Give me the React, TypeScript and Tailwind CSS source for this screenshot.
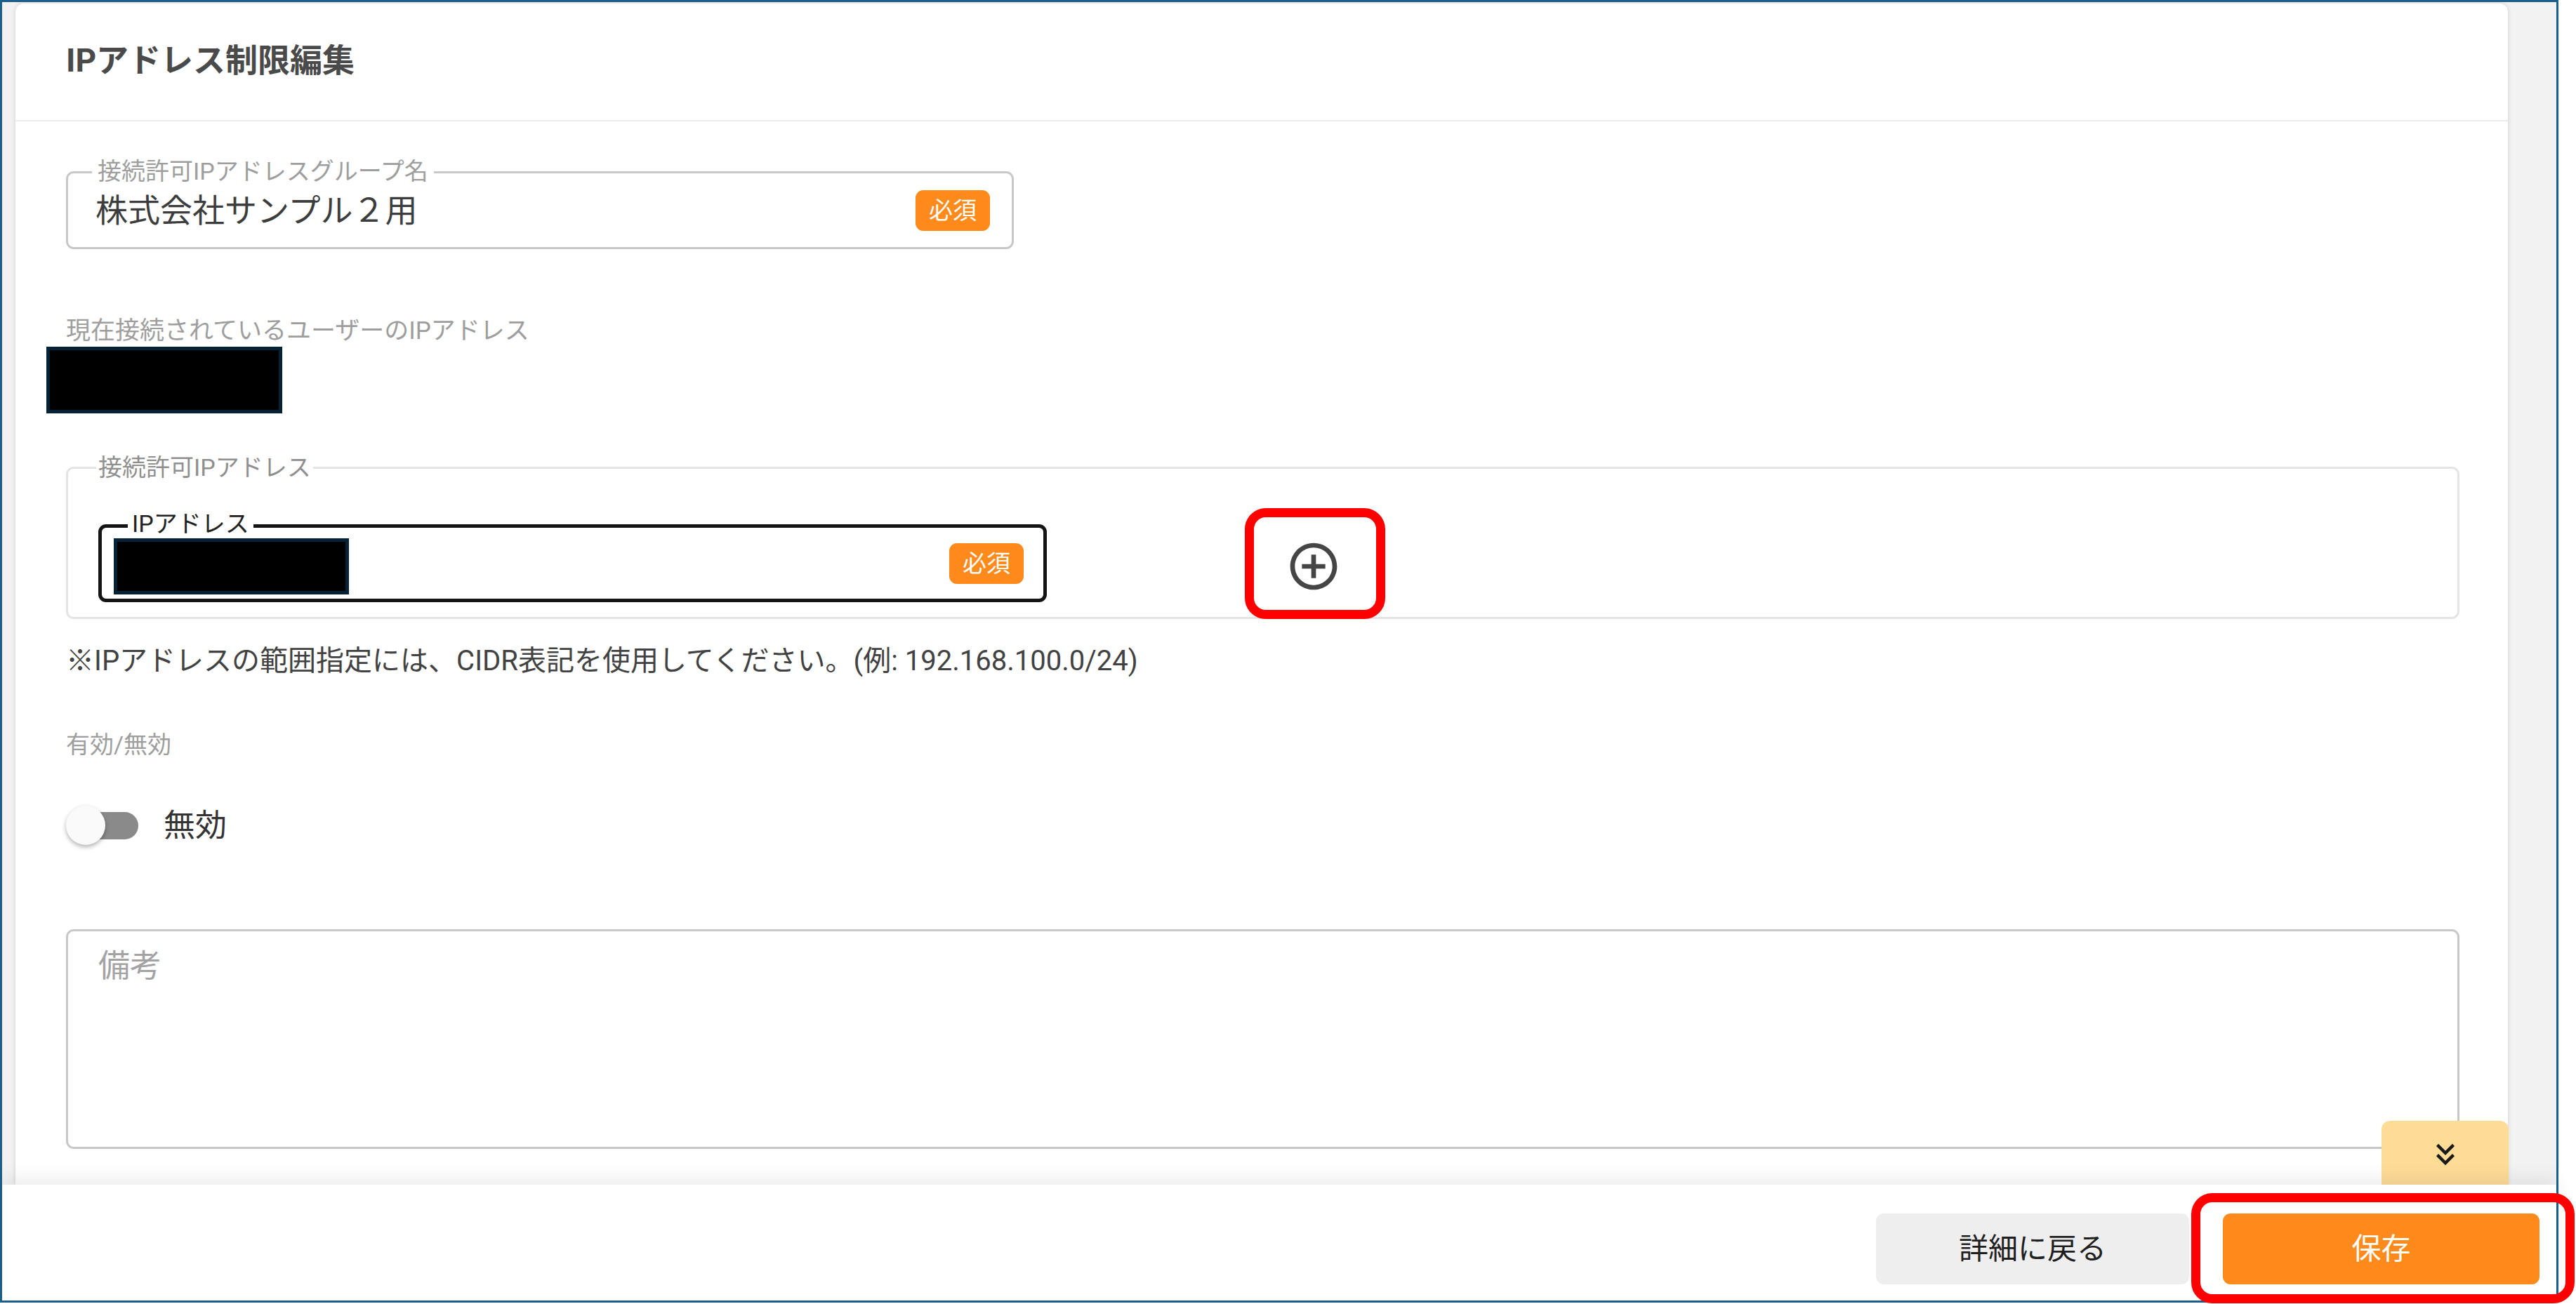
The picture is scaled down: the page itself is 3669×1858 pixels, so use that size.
import type { ReactNode } from 'react';

function RequiredBadge() {
  return (
    <span className="flex h-[58px] w-[106px] shrink-0 items-center justify-center rounded-[11px] bg-[#fd8a1a] text-[34px] leading-none text-white">
      必須
    </span>
  );
}

function Redacted({ className }: { className: string }) {
  return <div className={`shrink-0 border-[5px] border-[#052236] bg-black ${className}`} />;
}

function OutlinedField({
  label,
  focused = false,
  className = '',
  children,
}: {
  label: string;
  focused?: boolean;
  className?: string;
  children: ReactNode;
}) {
  return (
    <div
      className={`relative flex h-[111px] items-center justify-between rounded-[11px] bg-white ${
        focused ? 'border-[5px] border-[#141414]' : 'border-[3px] border-[#c8c8c8]'
      } ${className}`}
    >
      <span
        className={`absolute bg-white text-[34px] leading-[40px] ${
          focused ? '-top-[26px] left-[37px] px-[6px] text-[#222]' : '-top-[23px] left-[34px] px-[8px] text-[#9e9e9e]'
        }`}
      >
        {label}
      </span>
      {children}
    </div>
  );
}

function AddCircleIcon() {
  return (
    <svg viewBox="0 0 24 24" className="h-[80px] w-[80px] fill-[#454545]">
      <path d="M13 7h-2v4H7v2h4v4h2v-4h4v-2h-4zm-1-5C6.48 2 2 6.48 2 12s4.48 10 10 10 10-4.48 10-10S17.52 2 12 2m0 18c-4.41 0-8-3.59-8-8s3.59-8 8-8 8 3.59 8 8-3.59 8-8 8" />
    </svg>
  );
}

function DoubleArrowDownIcon() {
  return (
    <svg viewBox="0 0 24 24" className="h-[52px] w-[52px] fill-[#1a1a1a]">
      <path d="M18 6.41 16.59 5 12 9.58 7.41 5 6 6.41l6 6z" />
      <path d="M18 13l-1.41-1.41L12 16.17l-4.59-4.58L6 13l6 6z" />
    </svg>
  );
}

export default function App() {
  return (
    <div className="relative h-[1858px] w-[3669px] overflow-hidden bg-white font-[Roboto,'Noto_Sans_CJK_JP',sans-serif]">
      {/* Framed screenshot */}
      <div className="flex h-[1856px] w-[3644px] flex-col border-[3px] border-[#1d5f8c]">
        {/* Main area */}
        <div className="relative flex flex-1 overflow-hidden bg-[#f2f2f2] pl-[19px] pr-[69px] pt-[2px]">
          <div className="flex flex-1 flex-col rounded-t-[12px] bg-white shadow-[0_0_6px_rgba(0,0,0,0.14)]">
            {/* Header */}
            <div className="flex h-[168px] shrink-0 items-center border-b-[2px] border-[#ececec] pb-[4px] pl-[72px]">
              <h1 className="text-[46px] font-bold leading-none text-[#4a4a4a]">IPアドレス制限編集</h1>
            </div>

            {/* Body */}
            <div className="flex flex-col pl-[72px] pr-[69px]">
              <OutlinedField label="接続許可IPアドレスグループ名" className="mt-[71px] w-[1350px] pl-[39px] pr-[31px]">
                <span className="text-[46px] leading-none text-[#3d3d3d]">株式会社サンプル２用</span>
                <RequiredBadge />
              </OutlinedField>

              <p className="mt-[97px] text-[35px] leading-[40px] text-[#9e9e9e]">現在接続されているユーザーのIPアドレス</p>
              <Redacted className="ml-[-28px] mt-[2px] h-[95px] w-[336px]" />

              <fieldset className="mt-[57px] rounded-[11px] border-[3px] border-[#e4e4e4] p-0">
                <legend className="ml-[40px] px-[3px] text-[34px] leading-[40px] text-[#8f8f8f]">接続許可IPアドレス</legend>
                <div className="flex items-center pb-[21px] pl-[43px] pt-[61px]">
                  <OutlinedField label="IPアドレス" focused className="w-[1351px] pr-[28px]">
                    <Redacted className="ml-[17px] mt-[9px] h-[80px] w-[335px]" />
                    <RequiredBadge />
                  </OutlinedField>
                  <button className="ml-[340px] mt-[9px] flex items-center justify-center">
                    <AddCircleIcon />
                  </button>
                </div>
              </fieldset>

              <p className="mt-[36px] text-[40px] leading-[48px] text-[#424242]">
                ※IPアドレスの範囲指定には、CIDR表記を使用してください。(例: 192.168.100.0/24)
              </p>

              <p className="mt-[75px] text-[34px] leading-[40px] text-[#9e9e9e]">有効/無効</p>

              <div className="mt-[66px] flex h-[58px] items-center">
                <div className="relative h-[58px] w-[106px] shrink-0">
                  <div className="absolute left-[8px] top-[10px] h-[39px] w-[95px] rounded-full bg-[#8a8a8a]" />
                  <div className="absolute left-0 top-[1px] h-[56px] w-[56px] rounded-full bg-[#fafafa] shadow-[0_3px_6px_rgba(0,0,0,0.3)]" />
                </div>
                <span className="ml-[33px] text-[45px] leading-none text-[#333]">無効</span>
              </div>

              <div className="mt-[119px] h-[313px] rounded-[11px] border-[3px] border-[#c8c8c8] pl-[43px] pt-[23px]">
                <span className="text-[45px] leading-[53px] text-[#a3a3a3]">備考</span>
              </div>
            </div>
          </div>

          {/* Collapse toggle */}
          <button className="absolute bottom-0 right-[68px] flex h-[91px] w-[181px] justify-center rounded-t-[12px] bg-[#fddc96] pt-[22px]">
            <DoubleArrowDownIcon />
          </button>
        </div>

        {/* Footer */}
        <div className="relative z-10 flex h-[165px] shrink-0 items-start justify-end gap-[48px] bg-white pr-[24px] pt-[41px] shadow-[0_-10px_24px_rgba(0,0,0,0.07)]">
          <button className="flex h-[101px] w-[446px] items-center justify-center rounded-[11px] bg-[#eeeeee] text-[42px] text-[#1f1f1f]">
            詳細に戻る
          </button>
          <button className="flex h-[101px] w-[451px] items-center justify-center rounded-[11px] bg-[#fd8a1a] text-[42px] text-white">
            保存
          </button>
        </div>
      </div>

      {/* Red annotation boxes */}
      <div className="absolute left-[1773px] top-[724px] z-20 h-[158px] w-[200px] rounded-[30px] border-[13px] border-[#ff0000]" />
      <div className="absolute left-[3121px] top-[1700px] z-20 h-[157px] w-[546px] rounded-[30px] border-[13px] border-[#ff0000]" />
    </div>
  );
}
